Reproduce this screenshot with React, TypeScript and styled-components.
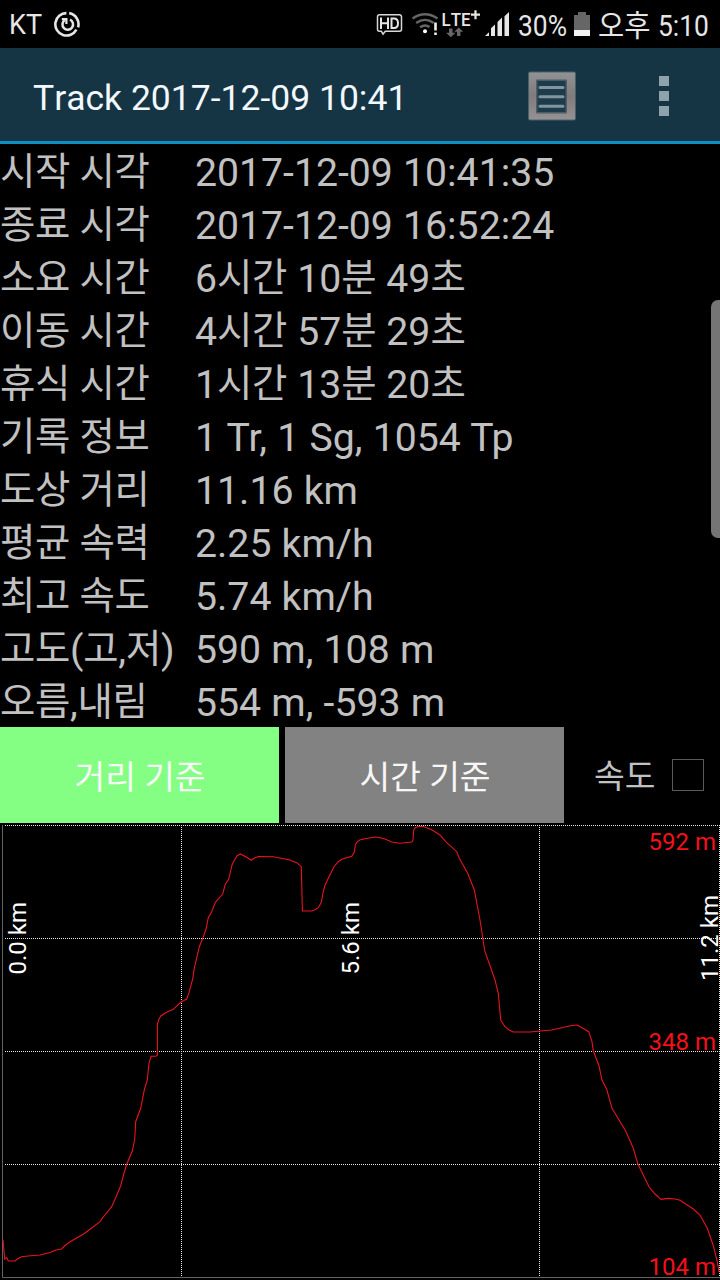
import React from "react";
import styled, { createGlobalStyle } from "styled-components";

const GlobalStyle = createGlobalStyle`
  *, *::before, *::after { box-sizing: border-box; }
  html, body { margin: 0; background: #000; }
  body { font-family: Roboto, "Noto Sans CJK KR", sans-serif; font-kerning: none; overflow: hidden; }
`;

const Screen = styled.div`
  position: relative;
  display: flex;
  flex-direction: column;
  width: 720px;
  height: 1280px;
  overflow: hidden;
  background: #000;
`;

const StatusBar = styled.header`
  display: flex;
  justify-content: space-between;
  height: 48px;
  flex: none;
  padding: 0 11px 0 9px;
  color: #e6e6e6;
`;

const StatusGroup = styled.div`
  display: flex;
  align-items: flex-start;
  height: 48px;
`;

const StatusText = styled.span<{ $width: number; $size: number; $scale?: number; $gap?: number; $drop?: number }>`
  display: block;
  width: ${(p) => p.$width}px;
  margin-left: ${(p) => p.$gap ?? 0}px;
  padding-top: ${(p) => p.$drop ?? 0}px;
  font-size: ${(p) => p.$size}px;
  line-height: 48px;
  white-space: nowrap;
  transform: scaleX(${(p) => p.$scale ?? 1});
  transform-origin: left center;
`;

const StatusIcon = styled.svg<{ $gap?: number }>`
  display: block;
  flex: none;
  margin-left: ${(p) => p.$gap ?? 0}px;
`;

const AppBar = styled.div`
  display: flex;
  align-items: center;
  height: 96px;
  flex: none;
  padding: 0 49px 0 33px;
  background: #153444;
  border-bottom: 3px solid #0f8fbf;
`;

const Title = styled.h1`
  flex: 1;
  margin: 0;
  padding-top: 6px;
  color: #f2f8fc;
  font-size: 35.5px;
  font-weight: 400;
  line-height: 48px;
  white-space: nowrap;
`;

const ListButton = styled.button`
  display: block;
  width: 50px;
  height: 52px;
  margin: 2px 82px 0 0;
  padding: 0;
  border: 0;
  background: none;
`;

const MoreButton = styled.button`
  display: flex;
  flex-direction: column;
  justify-content: space-between;
  width: 12px;
  height: 40px;
  margin: 3px 0 0;
  padding: 0;
  border: 0;
  background: none;
`;

const MoreDot = styled.span`
  width: 10px;
  height: 10px;
  background: #8ea2ae;
`;

const Stats = styled.dl`
  flex: none;
  margin: 0;
  color: #c1c1c1;
  font-size: 39.2px;
`;

const StatRow = styled.div`
  display: grid;
  grid-template-columns: 195px 1fr;
  height: 53px;
  padding-top: 3px;
  line-height: 53px;
  white-space: nowrap;
`;

const StatLabel = styled.dt`
  margin: 0;
`;

const StatValue = styled.dd`
  margin: 0;
  font-kerning: normal;
  word-spacing: 0.5px;
`;

const Hangul = styled.span`
  font-size: 0.98em;
  line-height: 1;
  letter-spacing: -0.4px;
  vertical-align: 1px;
`;

const Controls = styled.div`
  display: flex;
  align-items: center;
  flex: none;
  height: 96px;
`;

const ModeButton = styled.button<{ $active?: boolean }>`
  width: 279px;
  height: 96px;
  margin: 0 6px 0 0;
  padding: 0 0 1px 1px;
  border: 0;
  background: ${(p) => (p.$active ? "#84ff84" : "#828282")};
  color: #f7f7f7;
  font-family: inherit;
  font-size: 33.4px;
  font-kerning: none;
  white-space: nowrap;
`;

const SpeedToggle = styled.label`
  display: flex;
  align-items: center;
  gap: 16px;
  margin-left: 24px;
  color: #c1c1c1;
  font-size: 33.4px;
`;

const SpeedText = styled.span`
  width: 62px;
  padding-bottom: 3px;
  white-space: nowrap;
`;

const CheckBox = styled.span`
  width: 32px;
  height: 32px;
  border: 1px solid #5a5a5a;
`;

const Chart = styled.svg`
  display: block;
  flex: none;
  width: 720px;
  height: 457px;
  font-family: Roboto, sans-serif;
`;

const ScrollThumb = styled.div`
  position: absolute;
  top: 300px;
  right: 0;
  width: 9px;
  height: 238px;
  border-radius: 7px 0 0 7px;
  background: #757575;
`;

const stats: [string, string][] = [
  ["시작 시각", "2017-12-09 10:41:35"],
  ["종료 시각", "2017-12-09 16:52:24"],
  ["소요 시간", "6시간 10분 49초"],
  ["이동 시간", "4시간 57분 29초"],
  ["휴식 시간", "1시간 13분 20초"],
  ["기록 정보", "1 Tr, 1 Sg, 1054 Tp"],
  ["도상 거리", "11.16 km"],
  ["평균 속력", "2.25 km/h"],
  ["최고 속도", "5.74 km/h"],
  ["고도(고,저)", "590 m, 108 m"],
  ["오름,내림", "554 m, -593 m"],
];

const elevation =
  "3,1240 4.7,1259 6.7,1257.5 8.3,1261 15,1261 18,1258.5 21.7,1256.7 28,1256 40,1255 50,1252.5 56,1250 61.7,1249 65,1245.5 70,1241.7 83.3,1234.3 91,1228.5 100,1221.7 102.7,1217.7 107,1212.5 111.7,1206.7 116,1197 120.7,1185.7 124,1173 126.7,1164.3 132.3,1151 134.7,1139.3 135.7,1121.7 140.7,1108.3 144.3,1090 147.3,1080 149,1063.3 151,1056.3 156,1056.3 157.4,1055 157.4,1024 159,1019 161,1015.7 166,1012.5 173.3,1009.3 181,1002 186.7,999 189,992.7 192.7,979 194.3,968.3 199.3,946.7 203,937.7 206,929.3 208.3,917.7 211.7,911.7 215.3,902.3 222.7,894 225.3,884.3 228.7,879.3 232,865 234.5,860 237.3,855.7 240.3,854 246.7,857.3 251.3,860.3 254.5,858 258.3,856.5 273.3,856.7 289,859.7 296.7,862.7 301.3,866.7 302.4,911 311.7,911 315,909.8 318.3,907.7 321.3,902.3 323,893 324.7,886 328.3,878.3 334,866.7 338,862 341.7,859.3 351.7,856.3 354.3,852.3 355.3,845 357,842 359.7,840 365,838.7 375,837 380,837.7 385,839 391.7,842 400,843.3 411.7,842 413,840 413.7,830 415,828 417.3,826.7 422.7,826.3 431.7,829.7 440,835 445.7,841.7 456.7,851.7 459.3,858.3 467.7,873.3 474.3,890 480,920 482.3,935 484.7,950.7 495,980 498.3,993.3 500.7,1020 505,1026.7 509,1030 513.3,1032 530,1032 551.7,1030 571.7,1025.5 577.3,1025 588.7,1031.7 592,1041.7 593.3,1051 599,1065.7 602,1080 606.7,1089.3 612,1108.3 625.7,1131 633.3,1148.3 638,1164.3 649.3,1187.3 655,1194 661,1199.3 668,1198.4 675,1199 680,1200.3 693.3,1209 700,1215 707.3,1228.3 713.3,1245.7 717.3,1261.7 719,1272";

/* Korean runs are set slightly smaller than the Latin text around them. */
function MixedText({ children }: { children: string }) {
  return (
    <>
      {children.split(/([가-힣]+)/).map((run, i) => (i % 2 ? <Hangul key={i}>{run}</Hangul> : run))}
    </>
  );
}

function SyncIcon() {
  return (
    <StatusIcon width="28" height="48" viewBox="54 0 28 48" $gap={13} fill="none" stroke="#e6e6e6">
      <path d="M69.2 13.1a11.4 11.4 0 0 1 8.9 14.2M76.4 29.6a11.2 11.2 0 1 1-10-16.5" strokeWidth="2.6" />
      <path d="M70 19.6a5.3 5.3 0 1 1-5.2.4" strokeWidth="2.5" />
      <path d="M61.8 19.2h4.6v4.8" strokeWidth="2.2" />
    </StatusIcon>
  );
}

function HdIcon() {
  return (
    <StatusIcon width="28" height="48" viewBox="376 0 28 48">
      <path d="M379.5 14.8h20a2 2 0 0 1 2 2v12.4a2 2 0 0 1-2 2h-14.2l-2.3 3-1.6-3h-1.9a2 2 0 0 1-2-2V16.8a2 2 0 0 1 2-2z" fill="none" stroke="#d8d8d8" strokeWidth="1.5" />
      <path d="M381 17.5v11.5M388 17.5v11.5M381 23.2h7M391.5 17.5v11.5M391.5 18.5h2.5q4 0 4 4.7t-4 4.8h-2.5" fill="none" stroke="#e6e6e6" strokeWidth="2" />
    </StatusIcon>
  );
}

function WifiIcon() {
  return (
    <StatusIcon width="28" height="48" viewBox="411 0 28 48" $gap={7} fill="none" stroke="#666" strokeWidth="2.4">
      <path d="M412.5 18.5q12.5-8.5 25 0M416.2 23q8.8-6.2 17.5 0M420 27.3q5-3.6 9.5-.3" />
      <circle cx="425" cy="31.2" r="2" fill="#fff" stroke="none" />
      <path d="M435.5 22.5v8M435.5 32.5v2.5" stroke="#eee" strokeWidth="2.6" />
    </StatusIcon>
  );
}

function LteIcon() {
  return (
    <StatusIcon width="41" height="48" viewBox="440 0 41 48" $gap={1}>
      <text x="441.5" y="26" fontSize="18.5" fontWeight="500" fill="#e6e6e6" textLength="29" lengthAdjust="spacingAndGlyphs">LTE</text>
      <path d="M471 14.700h9M475.500 10.200v9" stroke="#e6e6e6" strokeWidth="2.2" />
      <path d="M449 28.500h3.500v4.200h3l-4.700 4.500-4.700-4.500h2.900zM457 36v-4.200h-2.800l4.500-4.300 4.500 4.300h-2.800V36z" fill="#666" />
    </StatusIcon>
  );
}

function SignalIcon() {
  return (
    <StatusIcon width="26" height="48" viewBox="484 0 26 48" $gap={3} fill="#e6e6e6">
      <path d="M485 36l4-3.700V36zM491 36v-7.800l4-3.700V36zM497.500 36V22l4.500-4.400V36zM504.500 36V16.200l4.500-4.300V36z" />
    </StatusIcon>
  );
}

function BatteryIcon() {
  return (
    <StatusIcon width="16" height="48" viewBox="574 0 16 48" $gap={6}>
      <path d="M578 12h8v3h4v15h-16V15h4z" fill="#666" />
      <path d="M574 30h16v6h-16z" fill="#f2f2f2" />
    </StatusIcon>
  );
}

function ListIcon() {
  return (
    <svg width="50" height="52" viewBox="0 0 50 52">
      <defs>
        <linearGradient id="frame" x1="0" y1="0" x2="0" y2="1">
          <stop offset="0" stopColor="#929292" />
          <stop offset=".5" stopColor="#817b7a" />
          <stop offset="1" stopColor="#969292" />
        </linearGradient>
      </defs>
      <rect x="1" y="1.5" width="48" height="49" rx="2" fill="#456170" />
      <rect x="2" y="2.5" width="46" height="47" rx="1" fill="url(#frame)" />
      <rect x="9" y="9.5" width="31" height="34" rx="1" fill="#4a5e69" />
      <rect x="10.5" y="11" width="28" height="31" fill="#1d3b4b" />
      <path d="M13 17.5h23M13 26.8h23M13 36.2h23" stroke="#82959e" strokeWidth="3" strokeLinecap="round" />
    </svg>
  );
}

function ElevationChart() {
  return (
    <Chart viewBox="0 823 720 457">
      <path d="M2.5 825V1277.5H720" fill="none" stroke="#636363" />
      <g stroke="#e8e8e8" strokeDasharray="1 1" shapeRendering="crispEdges">
        <path d="M5 825.5H720M5 938.5H720M5 1051.5H720M5 1164.5H720" />
        <path d="M181.5 825V1277M539.5 825V1277M719.5 825V1277" />
      </g>
      <polyline points={elevation} fill="none" stroke="#e8141e" strokeWidth="1.1" />
      <g fill="#f5101a" fontSize="24" textAnchor="end">
        <text x="716" y="850">592 m</text>
        <text x="716" y="1050">348 m</text>
        <text x="716" y="1275">104 m</text>
      </g>
      <g fill="#fff" fontSize="24">
        <text transform="translate(26 974.5) rotate(-90)">0.0 km</text>
        <text transform="translate(359 974.5) rotate(-90)">5.6 km</text>
        <text transform="translate(718 981) rotate(-90)">11.2 km</text>
      </g>
    </Chart>
  );
}

export default function App() {
  return (
    <>
      <GlobalStyle />
      <Screen>
        <StatusBar>
          <StatusGroup>
            <StatusText $width={32} $size={27} $drop={1}>KT</StatusText>
            <SyncIcon />
          </StatusGroup>
          <StatusGroup>
            <HdIcon />
            <WifiIcon />
            <LteIcon />
            <SignalIcon />
            <StatusText $width={50} $size={30} $scale={0.88} $gap={8} $drop={2}>30%</StatusText>
            <BatteryIcon />
            <StatusText $width={60} $size={30} $scale={0.95} $gap={8} $drop={2}>오후</StatusText>
            <StatusText $width={51} $size={30} $scale={0.88} $gap={0} $drop={2}>5:10</StatusText>
          </StatusGroup>
        </StatusBar>
        <AppBar>
          <Title>Track 2017-12-09 10:41</Title>
          <ListButton aria-label="List"><ListIcon /></ListButton>
          <MoreButton aria-label="More">
            <MoreDot /><MoreDot /><MoreDot />
          </MoreButton>
        </AppBar>
        <Stats>
          {stats.map(([label, value]) => (
            <StatRow key={label}>
              <StatLabel><MixedText>{label}</MixedText></StatLabel>
              <StatValue><MixedText>{value}</MixedText></StatValue>
            </StatRow>
          ))}
        </Stats>
        <Controls>
          <ModeButton $active>거리 기준</ModeButton>
          <ModeButton>시간 기준</ModeButton>
          <SpeedToggle>
            <SpeedText>속도</SpeedText>
            <CheckBox />
          </SpeedToggle>
        </Controls>
        <ElevationChart />
        <ScrollThumb />
      </Screen>
    </>
  );
}
